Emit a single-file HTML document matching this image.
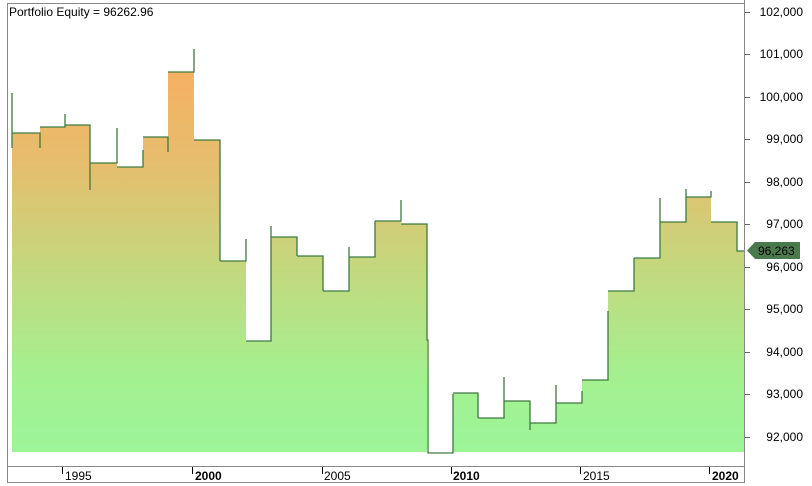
<!DOCTYPE html>
<html><head><style>
body{margin:0;background:#fff;width:812px;height:486px;overflow:hidden;font-family:"Liberation Sans",Arial,sans-serif}
</style></head><body>
<svg width="812" height="486" xmlns="http://www.w3.org/2000/svg" style="position:absolute;left:0;top:0">
<defs>
<linearGradient id="g" gradientUnits="userSpaceOnUse" x1="0" y1="70" x2="0" y2="452">
<stop offset="0" stop-color="#f6b062"/>
<stop offset="0.25" stop-color="#e5be6e"/>
<stop offset="0.5" stop-color="#c6d67c"/>
<stop offset="0.8" stop-color="#a4f090"/>
<stop offset="1" stop-color="#9bf598"/>
</linearGradient>
</defs>
<rect x="7.5" y="3.5" width="737" height="463" fill="none" stroke="#888"/>
<line x1="7" y1="482.5" x2="745" y2="482.5" stroke="#888"/>
<line x1="7.5" y1="466" x2="7.5" y2="483" stroke="#888"/>
<line x1="744.5" y1="0" x2="744.5" y2="483" stroke="#888"/>
<path d="M12,452 V133 H40 V127 H65 V125 H90 V163 H117 V167 H143 V137 H168 V72 H194 V140 H220 V261 H246 V341 H271 V237 H297 V256 H323 V291 H349 V257 H375 V221 H401 V224 H427 V452 H453 V393 H478 V418 H504 V401 H530 V423 H556 V403 H582 V380 H608 V291 H634 V258 H660 V222 H686 V197 H711 V222 H737 V251 H744 V452 Z" fill="url(#g)"/>
<path d="M12,93 V148 M12,133 H40 V148 M40,127 H65 V114 M65,125 H90 V190 M90,163 H117 V128 M117,167 H143 V150 M143,137 H168 V152 M168,72 H194 V49 M194,140 H220 V261 M220,261 H246 V239 M246,341 H271 V226 M271,237 H297 V256 M297,256 H323 V291 M323,291 H349 V247 M349,257 H375 V221 M375,221 H401 V200 M401,224 H427 V340 H428 V453 H453 V394 M453,393 H478 V418 M478,418 H504 V377 M504,401 H530 V430 M530,423 H556 V385 M556,403 H582 V391 M582,380 H608 V311 M608,291 H634 V258 M634,258 H660 V198 M660,222 H686 V189 M686,197 H711 V191 M711,222 H737 V251 H744" fill="none" stroke="#3d7a40" stroke-width="1.3"/>
<text x="9" y="16" font-size="12" fill="#000">Portfolio Equity = 96262.96</text>
<g font-size="12" fill="#000" text-anchor="end">
<text x="803" y="16">102,000</text><line x1="745" y1="12.5" x2="750" y2="12.5" stroke="#666"/>
<text x="803" y="58">101,000</text><line x1="745" y1="54.5" x2="750" y2="54.5" stroke="#666"/>
<text x="803" y="101">100,000</text><line x1="745" y1="97.5" x2="750" y2="97.5" stroke="#666"/>
<text x="803" y="143">99,000</text><line x1="745" y1="139.5" x2="750" y2="139.5" stroke="#666"/>
<text x="803" y="186">98,000</text><line x1="745" y1="182.5" x2="750" y2="182.5" stroke="#666"/>
<text x="803" y="228">97,000</text><line x1="745" y1="224.5" x2="750" y2="224.5" stroke="#666"/>
<text x="803" y="271">96,000</text><line x1="745" y1="267.5" x2="750" y2="267.5" stroke="#666"/>
<text x="803" y="313">95,000</text><line x1="745" y1="309.5" x2="750" y2="309.5" stroke="#666"/>
<text x="803" y="356">94,000</text><line x1="745" y1="352.5" x2="750" y2="352.5" stroke="#666"/>
<text x="803" y="398">93,000</text><line x1="745" y1="394.5" x2="750" y2="394.5" stroke="#666"/>
<text x="803" y="441">92,000</text><line x1="745" y1="437.5" x2="750" y2="437.5" stroke="#666"/>
</g>
<path d="M747,250.5 L755,242 H800 V259 H755 Z" fill="#4a7a4c"/>
<text x="758" y="255" font-size="12" fill="#000">96,263</text>
<g font-size="12" fill="#000" stroke="#000">
<line x1="62.5" y1="467" x2="62.5" y2="474" stroke-width="1"/>
<line x1="192.5" y1="467" x2="192.5" y2="474"/>
<line x1="322.5" y1="467" x2="322.5" y2="474"/>
<line x1="451.5" y1="467" x2="451.5" y2="474"/>
<line x1="580.5" y1="467" x2="580.5" y2="474"/>
<line x1="709.5" y1="467" x2="709.5" y2="474"/>
</g>
<g font-size="12" fill="#000">
<text x="65" y="480">1995</text>
<text x="195" y="480" font-weight="bold">2000</text>
<text x="324" y="480">2005</text>
<text x="453" y="480" font-weight="bold">2010</text>
<text x="583" y="480">2015</text>
<text x="712" y="480" font-weight="bold">2020</text>
</g>
</svg>
</body></html>
